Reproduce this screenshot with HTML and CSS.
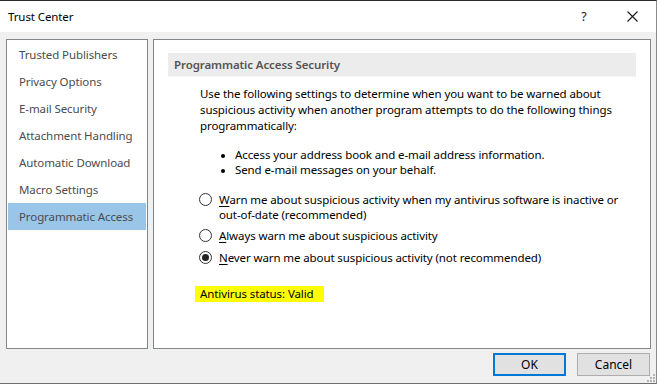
FILE: index.html
```html
<!DOCTYPE html>
<html>
<head>
<meta charset="utf-8">
<link rel="stylesheet" href="styles.css">
</head>
<body>
<div class="window">
  <div class="titlebar">
    <span class="title">Trust Center</span>
    <span class="help">?</span>
    <span class="close">
      <svg width="11" height="11" viewBox="0 0 11 11"><path d="M0.5 0.5 L10.5 10.5 M10.5 0.5 L0.5 10.5" stroke="#1a1a1a" stroke-width="1.1" fill="none"/></svg>
    </span>
  </div>
  <div class="client">
    <div class="panels">
      <ul class="nav">
        <li>Trusted Publishers</li>
        <li>Privacy Options</li>
        <li>E-mail Security</li>
        <li>Attachment Handling</li>
        <li>Automatic Download</li>
        <li>Macro Settings</li>
        <li class="active">Programmatic Access</li>
      </ul>
      <div class="content">
        <div class="section-head">Programmatic Access Security</div>
        <div class="section-body">
          <p class="intro">Use the following settings to determine when you want to be warned about suspicious activity when another program attempts to do the following things programmatically:</p>
          <ul class="bullets">
            <li>Access your address book and e-mail address information.</li>
            <li>Send e-mail messages on your behalf.</li>
          </ul>
          <div class="radios">
            <div class="radio"><span class="dot"></span><span class="label">Warn me about suspicious activity when my antivirus software is inactive or out-of-date (recommended)</span></div>
            <div class="radio"><span class="dot"></span><span class="label">Always warn me about suspicious activity</span></div>
            <div class="radio checked"><span class="dot"></span><span class="label">Never warn me about suspicious activity (not recommended)</span></div>
          </div>
          <div class="status">Antivirus status: Valid</div>
        </div>
      </div>
    </div>
    <div class="buttons">
      <button class="btn default">OK</button>
      <button class="btn">Cancel</button>
    </div>
    <svg class="grip" width="9" height="9" viewBox="0 0 9 9">
      <rect x="6" y="0" width="2" height="2" fill="#b4b4b4"/>
      <rect x="3" y="3" width="2" height="2" fill="#b4b4b4"/>
      <rect x="6" y="3" width="2" height="2" fill="#b4b4b4"/>
      <rect x="0" y="6" width="2" height="2" fill="#b4b4b4"/>
      <rect x="3" y="6" width="2" height="2" fill="#b4b4b4"/>
      <rect x="6" y="6" width="2" height="2" fill="#b4b4b4"/>
    </svg>
  </div>
</div>
</body>
</html>
```
FILE: styles.css
```css
* { box-sizing: border-box; }
html, body {
  margin: 0;
  padding: 0;
  width: 660px;
  height: 385px;
  overflow: hidden;
  background: #ffffff;
  font-family: "Noto Sans", "Open Sans", sans-serif;
  font-size: 11.5px;
  letter-spacing: -0.1px;
  color: #000;
}
.window {
  width: 657px;
  height: 384px;
  border-top: 1px solid #2b2b2b;
  border-right: 1px solid #8c8c8c;
  border-bottom: 1px solid #6e6e6e;
  display: flex;
  flex-direction: column;
  background: #f0f0f0;
}
.titlebar {
  height: 31px;
  background: #ffffff;
  display: flex;
  align-items: center;
  padding-left: 8px;
  flex-shrink: 0;
}
.title { flex: 1; font-size: 11.5px; color: #000; }
.help { width: 20px; text-align: center; font-size: 12.5px; margin-right: 27px; color: #1a1a1a; }
.close { width: 22px; display: flex; justify-content: center; margin-right: 13px; }
.client {
  flex: 1;
  position: relative;
  padding: 7px 5px 0 6px;
  display: flex;
  flex-direction: column;
}
.panels {
  display: flex;
  gap: 5px;
  height: 310px;
}
.nav {
  width: 142px;
  margin: 0;
  padding: 1px 1px 0 1px;
  list-style: none;
  background: #fff;
  border: 1px solid #82878c;
}
.nav li {
  height: 27px;
  line-height: 27px;
  padding-left: 11px;
  color: #4c4c4c;
  white-space: nowrap;
}
.nav li.active { background: #99c5e8; }
.content {
  flex: 1;
  background: #fff;
  border: 1px solid #82878c;
  padding: 13px 14px 0 14px;
}
.section-head {
  height: 24px;
  background: #ececec;
  border-bottom: 1px solid #f6f6f6;
  line-height: 23px;
  padding-left: 6px;
  font-weight: 600;
  color: #555;
}
.section-body { padding-left: 32px; padding-top: 9px; padding-right: 8px; }
.intro { margin: 0; line-height: 16px; }
.bullets {
  margin: 13px 0 0 0;
  padding: 0 0 0 35px;
  line-height: 15px;
}
.bullets li::marker { font-size: 10px; }
.radios { margin-top: 15px; display: flex; flex-direction: column; gap: 6px; }
.radio { display: flex; align-items: flex-start; margin-left: -1px; line-height: 15px; }
.radio.checked { margin-top: 1px; }
.dot {
  width: 13px; height: 13px;
  border: 1px solid #333;
  border-radius: 50%;
  flex-shrink: 0;
  margin-top: 1px;
  margin-right: 7px;
  display: flex; align-items: center; justify-content: center;
}
.radio.checked .dot::after {
  content: "";
  width: 7px; height: 7px;
  border-radius: 50%;
  background: #222;
}
.label::first-letter { text-decoration: underline; text-decoration-thickness: 1px; text-underline-offset: 2px; }
.status {
  display: inline-block;
  margin-top: 21px;
  margin-left: -5px;
  background: #ffff00;
  padding: 0 10px 0 5px;
  height: 16px;
  line-height: 16px;
}
.buttons {
  display: flex;
  justify-content: flex-end;
  gap: 11px;
  margin-top: 4px;
  padding-right: 1px;
}
.btn {
  width: 73px;
  height: 23px;
  background: #e1e1e1;
  border: 1px solid #adadad;
  font-family: inherit;
  font-size: 12px;
  color: #000;
  padding: 0;
}
.btn.default { border: 2px solid #0078d7; }
.grip { position: absolute; right: 0; bottom: 0; }
```
